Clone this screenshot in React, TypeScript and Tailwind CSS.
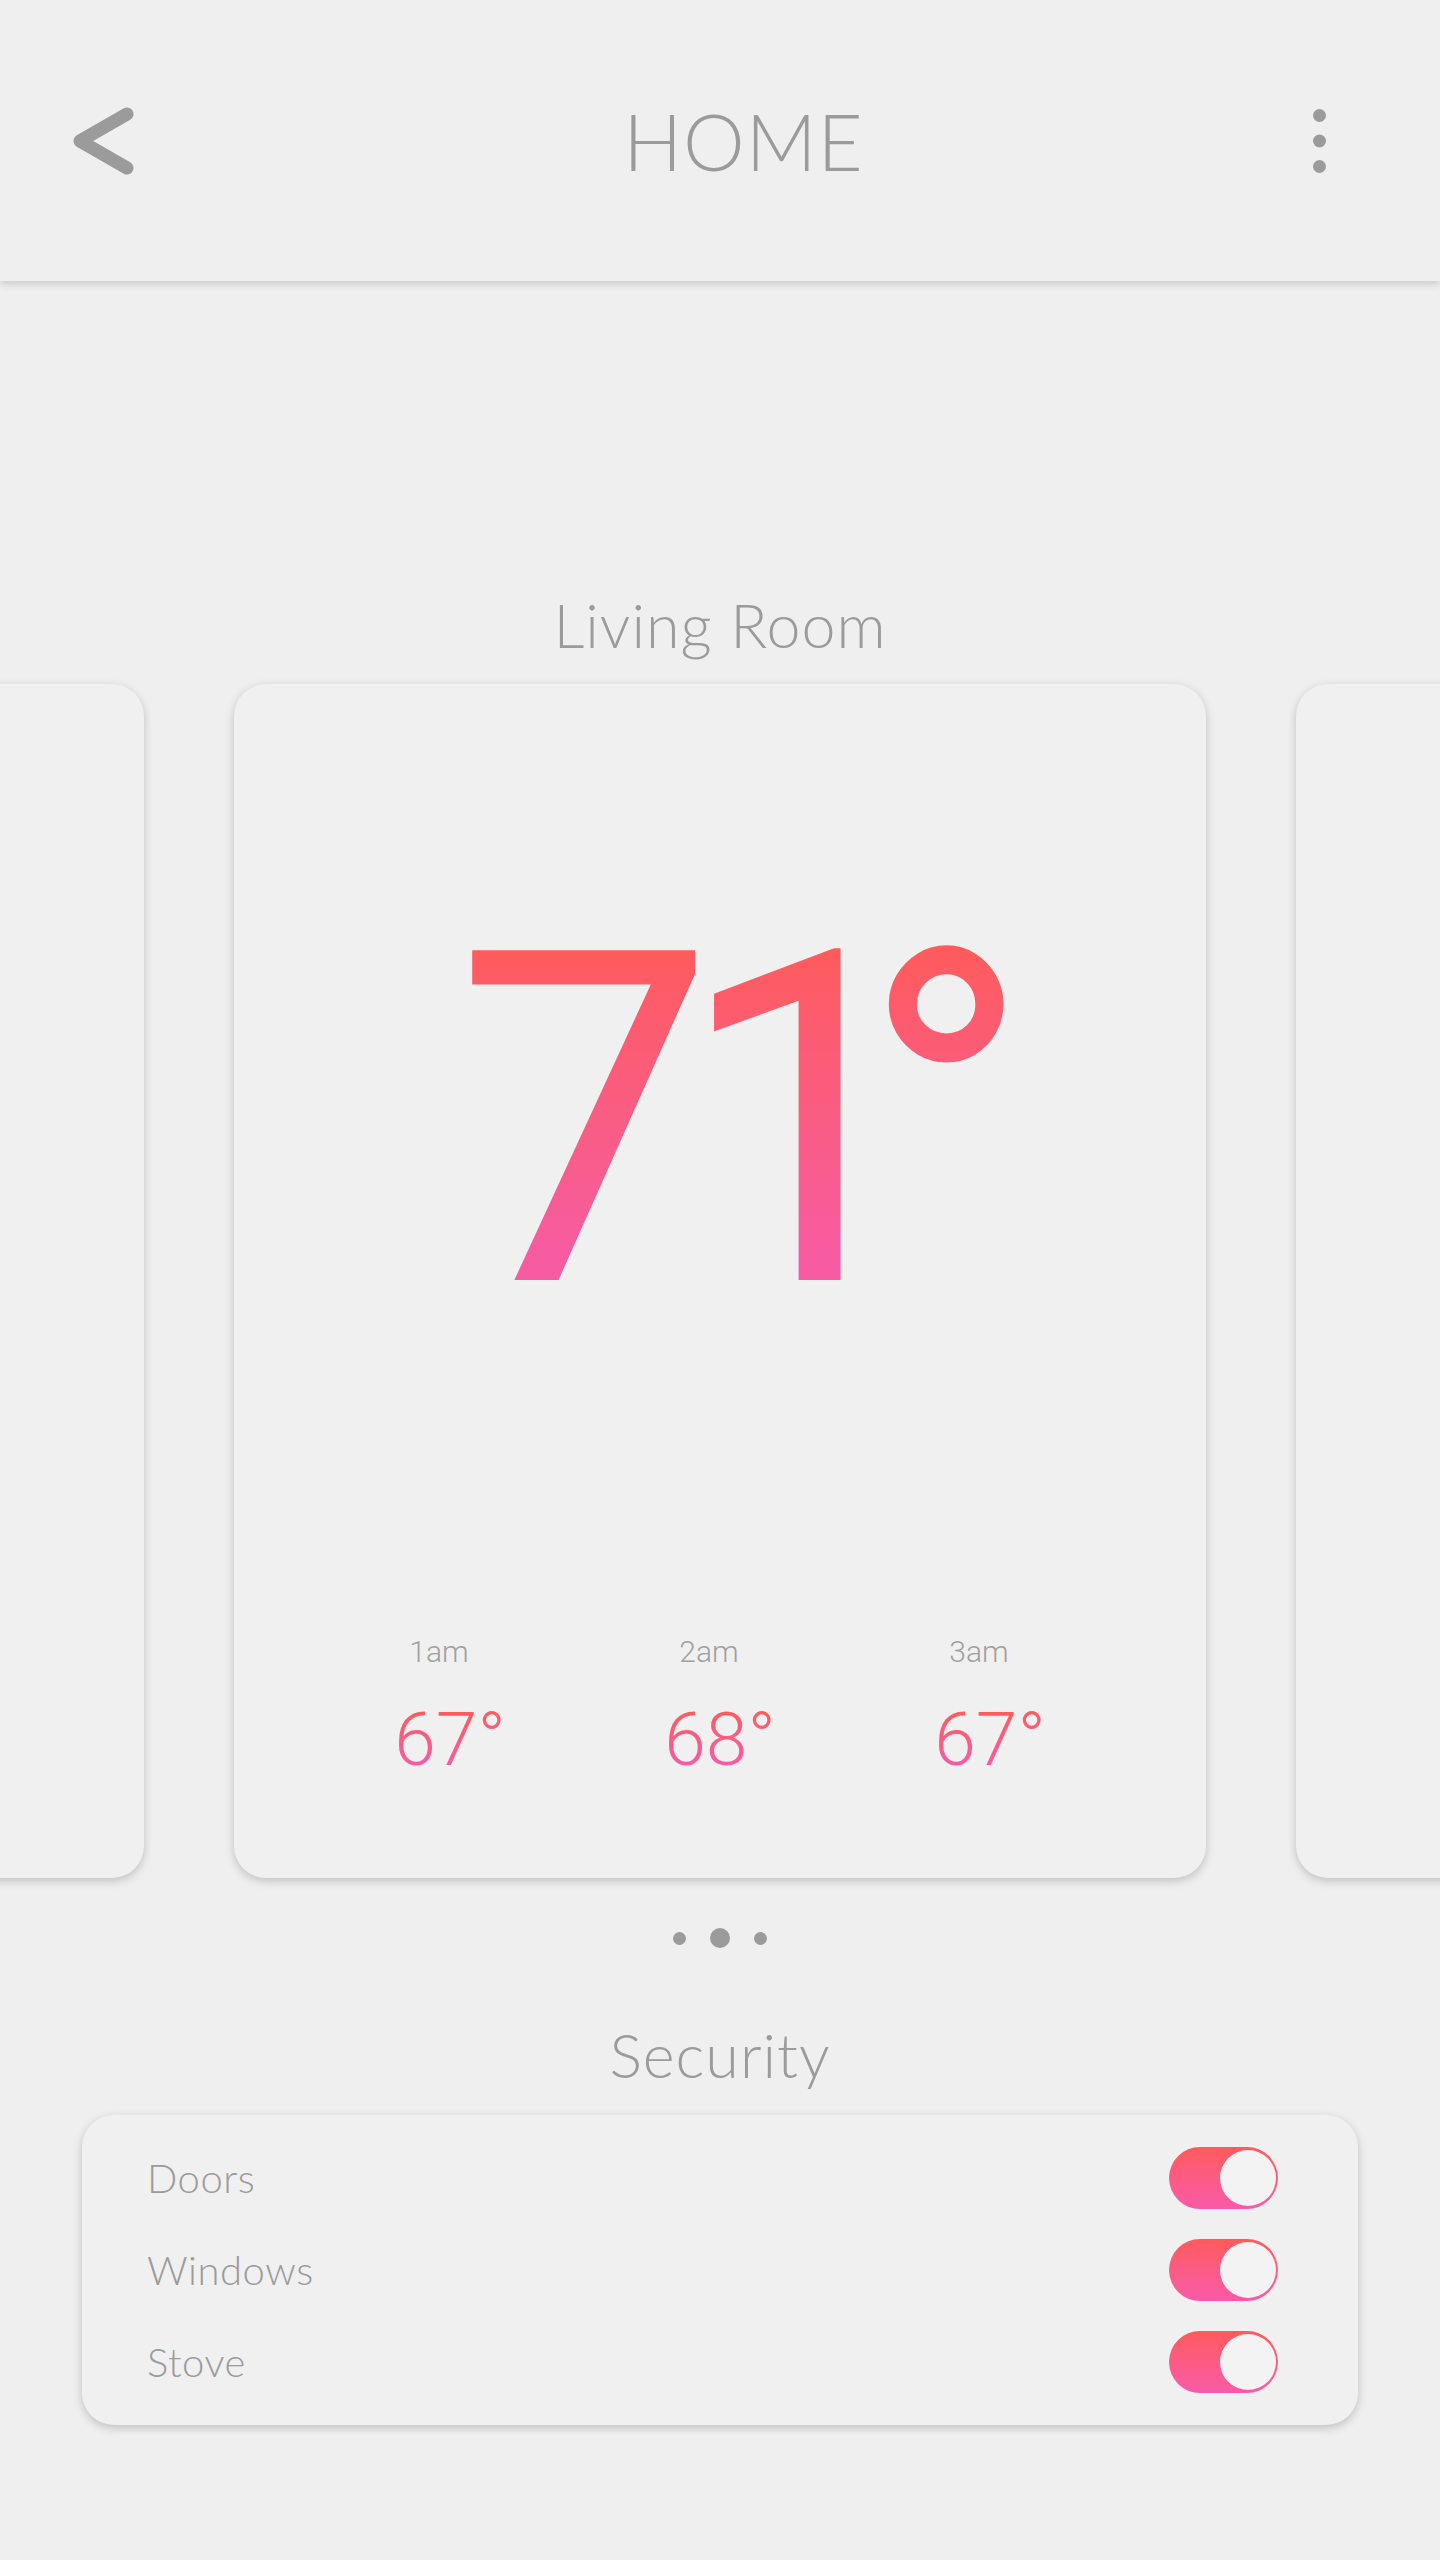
import React from "react";

const hours = [
  { time: "1am", temp: "67°" },
  { time: "2am", temp: "68°" },
  { time: "3am", temp: "67°" },
];

const switches = ["Doors", "Windows", "Stove"];

function Toggle() {
  return (
    <div className="w-[109px] h-[62px] rounded-full bg-linear-to-b from-[#ff5a5a] to-[#f95aa8] flex items-center justify-end pr-[2px]">
      <div className="w-[56px] h-[56px] rounded-full bg-[#f3f3f3]" />
    </div>
  );
}

export default function App() {
  return (
    <div className="min-h-[2560px] bg-[#efefef] font-['Lato',sans-serif] text-[#9b9b9b]">
      {/* Top bar */}
      <header className="relative z-10 h-[281px] bg-[#efefef] shadow-[0_3px_8px_rgba(0,0,0,0.16)] flex items-center pl-[70px] pr-[114px]">
        <button aria-label="Back" className="w-[64px] h-[70px]">
          <svg width="64" height="70" viewBox="0 0 64 70" fill="none" stroke="#9b9b9b" strokeWidth="13" strokeLinecap="round" strokeLinejoin="round">
            <path d="M57 8 L10 35 L57 62" />
          </svg>
        </button>
        <h1 className="flex-1 text-center pl-[40px] text-[78px] leading-none font-light tracking-[1px]">
          HOME
        </h1>
        <button aria-label="More" className="w-[13px] h-[64px]">
          <svg width="13" height="64" viewBox="0 0 13 64" fill="#9b9b9b">
            <circle cx="6.5" cy="6.5" r="6.5" />
            <circle cx="6.5" cy="32" r="6.5" />
            <circle cx="6.5" cy="57.5" r="6.5" />
          </svg>
        </button>
      </header>

      {/* Room carousel */}
      <h2 className="mt-[313px] text-center text-[61px] leading-none font-light tracking-[1px]">Living Room</h2>
      <div className="mt-[5px] py-[24px] overflow-hidden flex justify-center gap-[90px]">
        <div className="shrink-0 w-[972px] h-[1194px] rounded-[32px] bg-[#f0f0f0] shadow-[0_3px_10px_rgba(0,0,0,0.2)]" />
        <div className="shrink-0 w-[972px] h-[1194px] rounded-[32px] bg-[#f0f0f0] shadow-[0_3px_10px_rgba(0,0,0,0.2)] flex flex-col items-center pt-[206px]">
          <div className="flex pl-[47px] h-[464px] text-[464px] leading-none font-['Roboto'] font-normal whitespace-nowrap">
            <span className="tracking-[-40px] bg-linear-to-b from-[#ff5a4c] to-[#f55ab3] bg-clip-text text-transparent">
              7<span className="tracking-[-77px]">1</span>
            </span>
            <span className="bg-linear-to-b from-[#ff5a4c] to-[#f55ab3] bg-clip-text text-transparent">°</span>
          </div>
          <div className="mt-[283px] grid grid-cols-3 w-[810px] -ml-[10px]">
            {hours.map((h) => (
              <div key={h.time} className="flex flex-col items-center">
                <span className="mr-[12px] text-[30px] leading-none font-['Roboto'] font-light text-[#a0a0a0]">{h.time}</span>
                <span className="ml-[10px] mt-[35px] text-[75px] leading-none font-['Roboto'] font-light bg-linear-to-b from-[#ff5a4c] to-[#f55ab3] bg-clip-text text-transparent">
                  {h.temp}
                </span>
              </div>
            ))}
          </div>
        </div>
        <div className="shrink-0 w-[972px] h-[1194px] rounded-[32px] bg-[#f0f0f0] shadow-[0_3px_10px_rgba(0,0,0,0.2)]" />
      </div>

      {/* Pager */}
      <div className="mt-[26px] h-[20px] flex items-center justify-center gap-[24px]">
        <span className="w-[13px] h-[13px] rounded-full bg-[#9b9b9b]" />
        <span className="w-[20px] h-[20px] rounded-full bg-[#9b9b9b]" />
        <span className="w-[13px] h-[13px] rounded-full bg-[#9b9b9b]" />
      </div>

      {/* Security */}
      <h2 className="mt-[76px] text-center text-[61px] leading-none font-light tracking-[1px]">Security</h2>
      <div className="mt-[30px] mx-[82px] rounded-[32px] bg-[#f0f0f0] shadow-[0_3px_10px_rgba(0,0,0,0.2)] py-[32px] pl-[65px] pr-[80px] flex flex-col gap-[30px]">
        {switches.map((name) => (
          <div key={name} className="h-[62px] flex items-center justify-between">
            <span className="text-[40px] leading-none font-light tracking-[0.5px]">{name}</span>
            <Toggle />
          </div>
        ))}
      </div>
    </div>
  );
}
